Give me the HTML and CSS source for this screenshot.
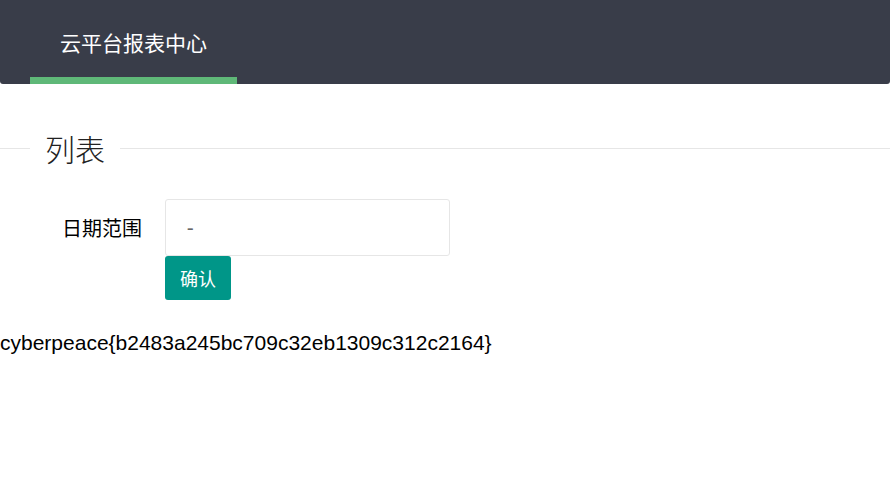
FILE: index.html
```html
<!DOCTYPE html>
<html lang="zh-CN">
<head>
<meta charset="utf-8">
<title>云平台报表中心</title>
<link rel="stylesheet" href="styles.css">
</head>
<body>
<header class="header">
  <nav class="nav">
    <a class="nav-item active" href="#">云平台报表中心</a>
  </nav>
</header>
<div class="field-title">
  <span class="line line-left"></span>
  <span class="legend">列表</span>
  <span class="line line-right"></span>
</div>
<form class="form">
  <div class="form-row">
    <label class="form-label">日期范围</label>
    <input class="form-input" type="text" value=" - ">
  </div>
  <div class="form-actions">
    <button class="btn" type="button">确认</button>
  </div>
</form>
<div class="result">cyberpeace{b2483a245bc709c32eb1309c312c2164}</div>
</body>
</html>
```
FILE: styles.css
```css
html, body {
  margin: 0;
  padding: 0;
  background: #fff;
}
body {
  font-family: "Liberation Sans", Arial, "Noto Sans CJK SC", sans-serif;
  color: #000;
}
.header {
  height: 84px;
  background: #393D49;
  border-radius: 0 0 3px 3px;
  padding: 0 30px;
  display: flex;
}
.nav {
  display: flex;
  height: 100%;
}
.nav-item {
  position: relative;
  display: block;
  padding: 0 30px;
  line-height: 84px;
  font-size: 21px;
  color: #fff;
  text-decoration: none;
  font-family: "Noto Sans CJK SC", sans-serif;
}
.nav-item.active::after {
  content: "";
  position: absolute;
  left: 0;
  right: 0;
  bottom: 0;
  height: 7px;
  background: #5FB878;
}
.field-title {
  display: flex;
  align-items: center;
  margin-top: 42px;
  height: 45px;
}
.line {
  height: 1px;
  background: #e6e6e6;
}
.line-left {
  width: 30px;
}
.line-right {
  flex: 1;
}
.legend {
  padding: 0 15px;
  font-size: 30px;
  line-height: 45px;
  font-weight: 300;
  color: #222;
  font-family: "Noto Sans CJK SC", sans-serif;
}
.form {
  margin: 28px 0 0;
}
.form-row {
  display: flex;
  align-items: center;
}
.form-label {
  width: 165px;
  box-sizing: border-box;
  padding-right: 23px;
  text-align: right;
  font-size: 20px;
  color: #000;
  font-family: "Noto Sans CJK SC", sans-serif;
}
.form-input {
  width: 285px;
  height: 57px;
  box-sizing: border-box;
  border: 1px solid #e6e6e6;
  border-radius: 3px;
  padding: 0 15px;
  font-size: 21px;
  color: #666;
  font-family: "Liberation Sans", Arial, sans-serif;
  outline: none;
  margin: 0;
}
.form-actions {
  padding-left: 165px;
}
.btn {
  display: block;
  height: 44px;
  padding: 0 15px;
  border: none;
  border-radius: 3px;
  background: #009688;
  color: #fff;
  font-size: 18px;
  font-family: "Noto Sans CJK SC", sans-serif;
  margin: 0;
}
.result {
  margin-top: 31px;
  font-size: 21px;
  line-height: 24px;
}
```
